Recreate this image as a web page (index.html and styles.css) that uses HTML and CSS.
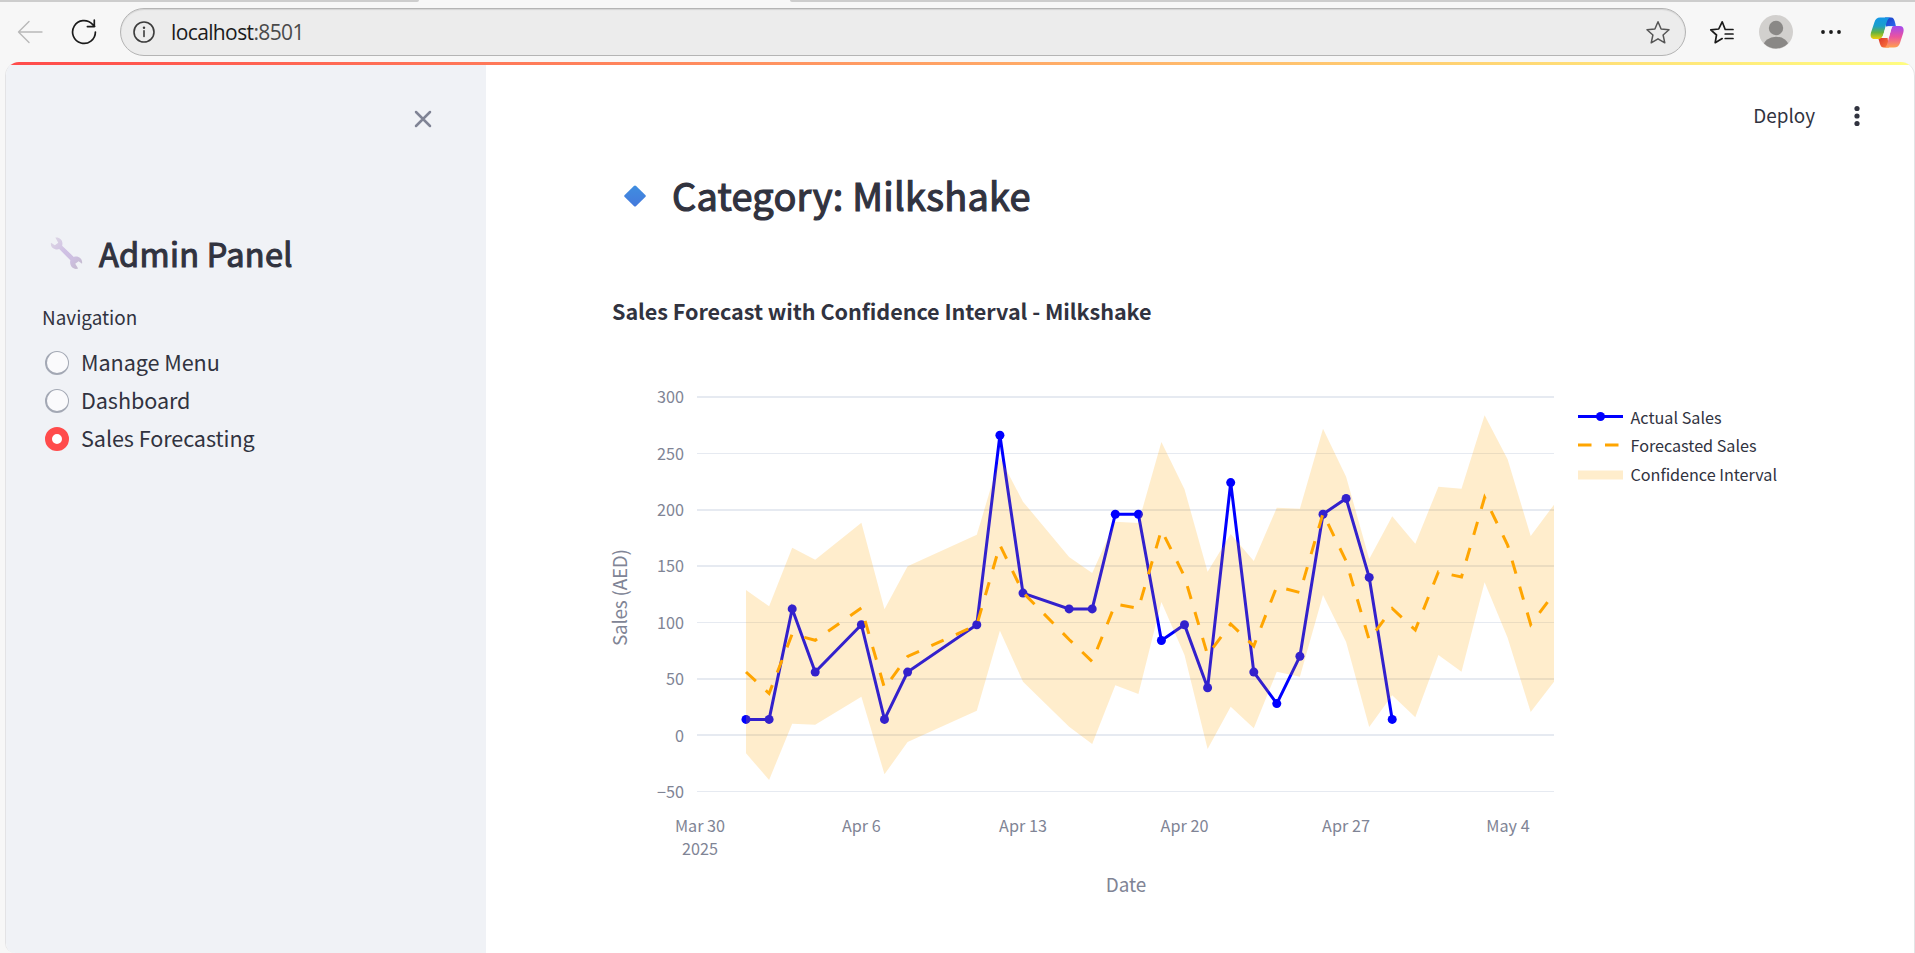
FILE: index.html
```html
<!DOCTYPE html>
<html lang="en">
<head>
<meta charset="utf-8">
<title>Sales Forecasting</title>
<link rel="stylesheet" href="styles.css">
</head>
<body>
<div class="browser">
  <div class="tabstrip"><span class="tab-left"></span><span class="tab-right"></span></div>
  <header class="toolbar">
    <svg class="icon-back" width="26" height="24" viewBox="0 0 26 24"><path d="M25 12H1.500M12 1.500L1.500 12L12 22.500"/></svg>
    <svg class="icon-reload" width="26" height="26" viewBox="0 0 26 26"><path d="M24.400 13A11.400 11.400 0 1 1 21.300 5.200L23.600 7.400M23.300 1.200V7.600H16.400"/></svg>
    <div class="address">
      <svg class="icon-info" width="22" height="22" viewBox="0 0 22 22"><circle cx="11" cy="11" r="10"/><path d="M11 9.800V15.500"/><circle class="dot" cx="11" cy="6.800" r="1.200"/></svg>
      <span class="url">localhost<span class="port">:8501</span></span>
      <svg class="icon-star" width="26" height="25" viewBox="0 0 26 25"><path d="M13 1.800L16.100 9L24 9.800L18.100 15L19.800 22.800L13 18.800L6.200 22.800L7.900 15L2 9.800L9.900 9Z"/></svg>
    </div>
    <svg class="icon-favs" width="26" height="25" viewBox="0 0 26 25"><path d="M24 9.500H16.200L13.200 1.800L9.700 9L1.800 9.800L7.500 15L6.200 22.700L13.200 18.600M16.200 14H24M16.200 18.500H24"/></svg>
    <svg class="icon-user" width="34" height="34" viewBox="0 0 34 34"><clipPath id="avatar"><circle cx="17" cy="17" r="16.500"/></clipPath><circle cx="17" cy="17" r="17"/><circle cx="17" cy="13" r="7.200"/><ellipse clip-path="url(#avatar)" cx="17" cy="31" rx="12.500" ry="9.300" fill="#8a8886"/></svg>
    <svg class="icon-more" width="20" height="4" viewBox="0 0 20 4"><circle cx="2" cy="2" r="1.900"/><circle cx="10" cy="2" r="1.900"/><circle cx="18" cy="2" r="1.900"/></svg>
    <svg class="icon-copilot" width="34" height="31" viewBox="0 0 34 31">
      <defs>
        <linearGradient id="cpA" x1="0" y1="0" x2="0" y2="1"><stop offset="0" stop-color="#1397e8"/><stop offset=".4" stop-color="#1c9fc8"/><stop offset=".7" stop-color="#66b33e"/><stop offset="1" stop-color="#f2cf08"/></linearGradient>
        <linearGradient id="cpB" x1="0" y1="0" x2="0" y2="1"><stop offset="0" stop-color="#a349f0"/><stop offset=".5" stop-color="#ea53a0"/><stop offset="1" stop-color="#ffa04e"/></linearGradient>
        <linearGradient id="cpC" x1="0" y1="0" x2="1" y2="1"><stop offset="0" stop-color="#1b3bc4"/><stop offset="1" stop-color="#2a6cf0"/></linearGradient>
        <linearGradient id="cpD" x1="0" y1="0" x2="1" y2="1"><stop offset="0" stop-color="#d9342c"/><stop offset="1" stop-color="#ff7a3c"/></linearGradient>
      </defs>
      <path d="M15 .5H21C23.600 .5 24.300 2.500 25.200 6L26 9.500H16Z"/>
      <path d="M8.500 20.500H17.500L19 30.500H13.500C10.800 30.500 10 27 8.500 22Z"/>
      <path d="M10 .5H21C18 .5 17 4 15.500 9.500L13.500 17C12.500 20.500 11 22 8 22H4.500C1 22 0 19.500 1 15.500L4.500 5C5.500 2 7 .5 10 .5Z"/>
      <path d="M24 9H29.500C33.500 9 34.300 12 33.200 16L30 26C29 29 27.200 30.500 24 30.500H13.500C16.500 30.500 17.300 27 18.500 22L21 13C21.800 10.500 22.200 9 24 9Z"/>
      <path d="M19.500 9.300H23.500C22 9.500 21.600 10.800 21 13L19.300 19C19 20.300 18.300 21 17 21H11C12.300 20.500 13 19 13.500 17L15.300 11.500C16 9.800 17.500 9.300 19.500 9.300Z"/>
    </svg>
  </header>
  <div class="page">
    <div class="decoration"></div>
    <aside class="sidebar">
      <svg class="icon-close" width="18" height="18" viewBox="0 0 18 18"><path d="M2 2L16 16M16 2L2 16"/></svg>
      <h2 class="panel-title">
        <svg width="33" height="34" viewBox="0 0 34 34"><defs><linearGradient id="steel" x1="0" y1="0" x2="1" y2="1"><stop offset="0" stop-color="#ded8e4"/><stop offset=".45" stop-color="#cfc0e4"/><stop offset=".7" stop-color="#cdbfe0"/><stop offset="1" stop-color="#c3bbcb"/></linearGradient></defs><path fill="url(#steel)" d="M5.500 1C10 .3 14 4 12.500 9.500L24.500 21C29.500 19.500 34 23 33 28L29.500 25.500L26 28L29 33C24 35 19.500 30 21 24.500L9.500 13C5 14.500 0 11 1 6.500L5 9L8.500 6.500Z"/></svg>
        <span>Admin Panel</span>
      </h2>
      <p class="nav-label">Navigation</p>
      <div class="radios">
        <label class="radio"><i class="knob"></i><span>Manage Menu</span></label>
        <label class="radio"><i class="knob"></i><span>Dashboard</span></label>
        <label class="radio"><i class="knob checked"></i><span>Sales Forecasting</span></label>
      </div>
    </aside>
    <main class="main">
      <div class="actions"><span class="deploy">Deploy</span><svg width="6" height="22" viewBox="0 0 6 22"><circle cx="3" cy="3.500" r="2.600"/><circle cx="3" cy="11" r="2.600"/><circle cx="3" cy="18.500" r="2.600"/></svg></div>
      <h1 class="heading">
        <svg width="22" height="22" viewBox="0 0 22 22"><defs><linearGradient id="gem" x1="0" y1="0" x2="0" y2="1"><stop offset="0" stop-color="#3f8ee0"/><stop offset="1" stop-color="#4579dc"/></linearGradient></defs><path fill="url(#gem)" d="M9.900 .9Q11 -.1 12.100 .9L21.300 9.900Q22.300 11 21.300 12.100L12.100 21.100Q11 22.100 9.900 21.100L.7 12.100Q-.3 11 .7 9.900Z"/></svg>
        <span>Category: Milkshake</span>
      </h1>
      <svg class="chart" width="1300" height="663" viewBox="597 290 1300 663">
        <text class="chart-title" x="612" y="320" textLength="539.500">Sales Forecast with Confidence Interval - Milkshake</text>
        <g class="grid">
          <path class="thick" d="M697 397H1554M697 510H1554M697 566H1554M697 679H1554M697 735H1554"/>
          <path class="thin" d="M697 453.500H1554M697 622.500H1554M697 791.500H1554"/>
        </g>
        <g class="ticks" text-anchor="end">
          <text x="684" y="403">300</text><text x="684" y="460">250</text><text x="684" y="516">200</text><text x="684" y="572">150</text><text x="684" y="629">100</text><text x="684" y="685">50</text><text x="684" y="742">0</text><text x="684" y="798">−50</text>
        </g>
        <g class="ticks" text-anchor="middle">
          <text x="700" y="832">Mar 30</text><text x="700" y="855">2025</text><text x="861.300" y="832">Apr 6</text><text x="1023" y="832">Apr 13</text><text x="1184.500" y="832">Apr 20</text><text x="1346" y="832">Apr 27</text><text x="1508" y="832">May 4</text>
        </g>
        <text class="axis-title" text-anchor="middle" x="1126" y="892">Date</text>
        <text class="axis-title" text-anchor="middle" transform="translate(627 597.500) rotate(-90)" textLength="97">Sales (AED)</text>
        <polyline class="actual" points="746,719.400 769.100,719.400 792.200,608.900 815.200,672.100 861.400,624.700 884.500,719.400 907.600,672.100 976.800,624.700 999.900,435.300 1023,593.100 1069.100,608.900 1092.200,608.900 1115.300,514.200 1138.400,514.200 1161.400,640.500 1184.500,624.700 1207.600,687.800 1230.700,482.600 1253.800,672.100 1276.800,703.600 1299.900,656.300 1323,514.200 1346.100,498.400 1369.200,577.400 1392.200,719.400"/>
        <g class="dots">
          <circle cx="746" cy="719.400" r="4.500"/><circle cx="769.100" cy="719.400" r="4.500"/><circle cx="792.200" cy="608.900" r="4.500"/><circle cx="815.200" cy="672.100" r="4.500"/><circle cx="861.400" cy="624.700" r="4.500"/><circle cx="884.500" cy="719.400" r="4.500"/><circle cx="907.600" cy="672.100" r="4.500"/><circle cx="976.800" cy="624.700" r="4.500"/><circle cx="999.900" cy="435.300" r="4.500"/><circle cx="1023" cy="593.100" r="4.500"/><circle cx="1069.100" cy="608.900" r="4.500"/><circle cx="1092.200" cy="608.900" r="4.500"/><circle cx="1115.300" cy="514.200" r="4.500"/><circle cx="1138.400" cy="514.200" r="4.500"/><circle cx="1161.400" cy="640.500" r="4.500"/><circle cx="1184.500" cy="624.700" r="4.500"/><circle cx="1207.600" cy="687.800" r="4.500"/><circle cx="1230.700" cy="482.600" r="4.500"/><circle cx="1253.800" cy="672.100" r="4.500"/><circle cx="1276.800" cy="703.600" r="4.500"/><circle cx="1299.900" cy="656.300" r="4.500"/><circle cx="1323" cy="514.200" r="4.500"/><circle cx="1346.100" cy="498.400" r="4.500"/><circle cx="1369.200" cy="577.400" r="4.500"/><circle cx="1392.200" cy="719.400" r="4.500"/>
        </g>
        <polygon class="band" points="746,590 769.100,606.300 792.200,547.700 815.200,559.700 861.400,522.700 884.500,609.300 907.600,566.300 976.800,534.700 999.900,457.500 1023,501.700 1069.100,557 1092.200,573 1115.300,521.700 1138.400,523 1161.400,442 1184.500,489.300 1207.600,571.700 1230.700,534 1253.800,561 1276.800,507.700 1299.900,508.700 1323,428.700 1346.100,476.700 1369.200,559 1392.200,516.300 1415.300,543.700 1438.400,486.700 1461.500,488.700 1484.600,415.300 1507.600,459.300 1530.700,536 1554,504.700 1554,681.700 1530.700,712 1507.600,637.700 1484.600,582.300 1461.500,671.700 1438.400,655 1415.300,717.300 1392.200,695.300 1369.200,727 1346.100,642 1323,595 1299.900,676.700 1276.800,671.700 1253.800,728.300 1230.700,706.700 1207.600,749 1184.500,655 1161.400,602 1138.400,694 1115.300,685.300 1092.200,744 1069.100,726.700 1023,681.700 999.900,630.700 976.800,710.700 907.600,742 884.500,774.300 861.400,696.700 815.200,724.700 792.200,723.700 769.100,780 746,753.300"/>
        <polyline class="forecast" points="746,672 769.100,693.500 792.200,634 815.200,640.300 861.400,608 884.500,688 907.600,656.500 976.800,625 999.900,545 1023,592.500 1069.100,639.500 1092.200,661.500 1115.300,604 1138.400,608.500 1161.400,530 1184.500,576.500 1207.600,655 1230.700,624 1253.800,646 1276.800,586.500 1299.900,592.500 1323,513.500 1346.100,561 1369.200,640 1392.200,608.500 1415.300,630 1438.400,572 1461.500,577 1484.600,497.500 1507.600,545 1530.700,624.500 1554,593.500"/>
        <g class="legend">
          <path class="actual" d="M1578 416.500H1623"/><circle class="dots" cx="1600.500" cy="416.500" r="4.500"/>
          <path class="forecast" d="M1578 445H1623"/>
          <rect class="band" x="1578" y="470.500" width="45" height="9"/>
          <text x="1630.500" y="424" textLength="91">Actual Sales</text>
          <text x="1630.500" y="452" textLength="126">Forecasted Sales</text>
          <text x="1630.500" y="481" textLength="146.500">Confidence Interval</text>
        </g>
      </svg>
    </main>
  </div>
</div>
</body>
</html>
```
FILE: styles.css
```css
* { box-sizing: border-box; }
html, body { margin: 0; height: 100%; overflow: hidden; }
body { font-family: "Noto Sans CJK SC", "Noto Sans", sans-serif; color: #31333f; background: #f7f7f7; }
svg { display: block; flex: none; }
h1, h2, p { margin: 0; }

.browser { height: 953px; display: flex; flex-direction: column; background: #f7f7f7; }
.tabstrip { height: 2px; display: flex; justify-content: space-between; }
.tab-left, .tab-right { height: 2px; background: #cdcdcd; }
.tab-left { width: 419px; border-bottom-right-radius: 2px; }
.tab-right { width: 1125px; border-bottom-left-radius: 2px; }

.toolbar { height: 60px; display: flex; align-items: center; padding: 0 10px 0 17px; }
.toolbar path, .toolbar circle { fill: none; }
.toolbar svg { fill: none; stroke-linejoin: round; stroke-linecap: round; }
.icon-back { stroke: #b9b9b9; stroke-width: 1.4; }
.icon-reload { margin-left: 28px; stroke: #1b1b1b; stroke-width: 1.700; }
.address { width: 1566px; height: 48px; margin-left: 23px; padding: 0 14px 0 12px; display: flex; align-items: center; background: #ececec; border: 1px solid #b4b4b4; border-radius: 24px; box-shadow: inset 0 1px 1px #d4d4d4; }
.icon-info { stroke: #3c3c3c; stroke-width: 1.600; }
.toolbar .icon-info .dot { fill: #3c3c3c; stroke: none; }
.url { flex: 1; margin-left: 16px; font-family: "Open Sans", sans-serif; font-size: 21px; line-height: 28px; letter-spacing: -.62px; color: #1b1b1b; }
.port { color: #4a4a4a; }
.icon-star { stroke: #555; stroke-width: 1.500; }
.icon-favs { margin-left: 23px; stroke: #1b1b1b; stroke-width: 1.700; }
.toolbar .icon-user { margin-left: 24px; }
.toolbar .icon-user circle { fill: #d2d0ce; }
.toolbar .icon-user circle + circle { fill: #8a8886; }
.icon-more { margin-left: 27.500px; }
.toolbar .icon-more circle { fill: #1b1b1b; }
.icon-copilot { margin-left: 29.500px; }
.toolbar .icon-copilot path:nth-of-type(1) { fill: url(#cpC); }
.toolbar .icon-copilot path:nth-of-type(2) { fill: url(#cpD); }
.toolbar .icon-copilot path:nth-of-type(3) { fill: url(#cpA); }
.toolbar .icon-copilot path:nth-of-type(4) { fill: url(#cpB); }
.toolbar .icon-copilot path:nth-of-type(5) { fill: #f7f7f7; }

.page { flex: 1; margin: 0 0 0 5px; display: grid; grid-template: 3px 1fr / 480px 1fr; background: #fff; border: solid #e3e3e5; border-width: 0 1px; border-radius: 14px 14px 0 10px; overflow: hidden; }
.decoration { grid-column: 1 / 3; background: linear-gradient(90deg, #ff4b4b, #fffd80); }
.sidebar { background: #f0f2f6; padding: 45px 0 0 36px; }
.icon-close { margin-left: 372px; fill: none; stroke: #808495; stroke-width: 2.500; stroke-linecap: round; }
.panel-title { margin-top: 103px; display: flex; align-items: center; gap: 16px; padding-left: 8px; font-size: 32.500px; line-height: 44px; font-weight: 400; letter-spacing: .3px; -webkit-text-stroke: 1.100px #31333f; }
.nav-label { margin-top: 30px; font-size: 18.900px; line-height: 24px; }
.radios { margin-top: 14px; }
.radio { display: flex; align-items: center; height: 38px; padding-left: 3px; gap: 12px; font-size: 21.600px; line-height: 28px; letter-spacing: -.07px; }
.knob { width: 24px; height: 24px; margin-top: 2px; border-radius: 50%; background: #fafafc; border: 1px solid #a3a8b4; border-width: 1px 1px 2px 2px; }
.knob.checked { background: #fff; border: 7.500px solid #ff4b4b; }

.main { padding: 33px 0 0 111px; }
.actions { display: flex; justify-content: flex-end; align-items: center; gap: 39px; padding-right: 54px; height: 34px; font-size: 18.900px; line-height: 34px; }
.actions svg { fill: #31333f; margin-top: 2px; }
.heading { margin-top: 36px; padding-left: 27px; display: flex; align-items: center; gap: 26px; font-size: 37.900px; line-height: 54px; font-weight: 400; letter-spacing: .27px; -webkit-text-stroke: 1.200px #31333f; }
.heading svg { margin-top: 2px; }
.chart { margin-top: 68px; }

.chart text { font-family: "Noto Sans CJK SC", "Noto Sans", sans-serif; }
.chart .chart-title { font-size: 21.600px; font-weight: 700; fill: #31333f; }
.ticks text { font-size: 16.200px; fill: #808495; }
.chart .axis-title { font-size: 18.900px; fill: #808495; }
.thick, .thin { stroke: #e6eaf1; stroke-width: 2; }
.thin { stroke-width: 1; }
.actual { fill: none; stroke: #00f; stroke-width: 3; }
.dots { fill: #00f; }
.forecast { fill: none; stroke: #ffa500; stroke-width: 3; stroke-dasharray: 13.500; }
.band { fill: rgba(255, 165, 0, .2); }
.legend text { font-size: 16.200px; fill: #31333f; }
```
